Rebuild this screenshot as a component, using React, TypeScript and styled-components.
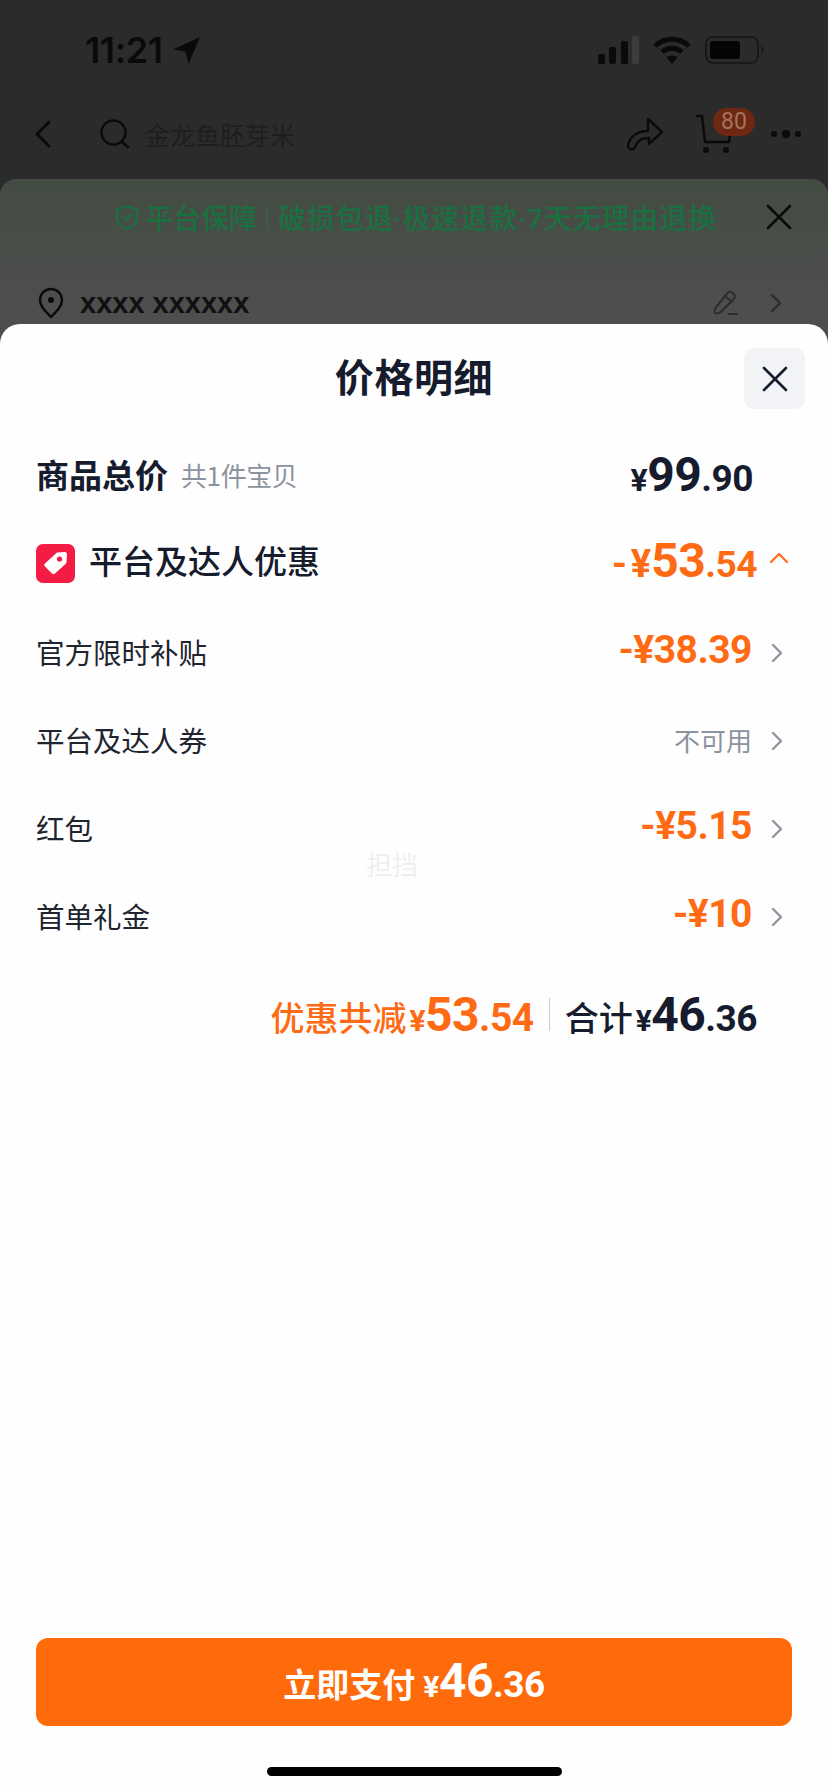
import styled, { createGlobalStyle } from 'styled-components';

const GlobalStyle = createGlobalStyle`
  html, body {
    margin: 0;
    padding: 0;
    background: #2b2b2b;
  }
  * {
    box-sizing: border-box;
  }
`;

const fontStack = `Roboto, "Noto Sans CJK SC", sans-serif`;
const cjkStack = `"Noto Sans CJK SC", sans-serif`;

const Screen = styled.div`
  position: relative;
  width: 828px;
  height: 1792px;
  overflow: hidden;
  background: #2b2b2b;
  font-family: ${cjkStack};
`;

const StatusBar = styled.div`
  display: flex;
  align-items: center;
  height: 100px;
  padding: 0 63px 0 85px;
`;

const Time = styled.span`
  font-family: Inter, sans-serif;
  font-size: 36px;
  font-weight: 600;
  letter-spacing: -0.4px;
  color: #0a0a0a;
`;

const StatusIcons = styled.div`
  display: flex;
  align-items: center;
  margin-left: auto;
  gap: 14px;
`;

const NavBar = styled.div`
  display: flex;
  align-items: center;
  height: 68px;
  padding: 0 26px 0 35px;
`;

const SearchText = styled.span`
  margin-left: 15px;
  font-size: 25px;
  color: #1e1e1e;
`;

const NavIcons = styled.div`
  display: flex;
  align-items: center;
  margin-left: auto;
`;

const CartWrap = styled.div`
  position: relative;
  display: flex;
  margin: 0 37px 0 31px;
`;

const CartBadge = styled.span`
  position: absolute;
  left: 18px;
  top: -6px;
  width: 42px;
  height: 28px;
  border-radius: 14px;
  background: #6e2710;
  color: #a5735f;
  font-family: Roboto, sans-serif;
  font-size: 23px;
  line-height: 28px;
  text-align: center;
`;

const BackSheet = styled.div`
  margin-top: 11px;
  height: 220px;
  border-radius: 16px 16px 0 0;
  background: linear-gradient(180deg, #434c42 0%, #4c4e4c 45%, #4f4f4f 100%);
`;

const GuaranteeRow = styled.div`
  position: relative;
  display: flex;
  align-items: center;
  height: 76px;
  padding-left: 115px;
  color: #1a7040;
  font-family: ${fontStack};
  font-size: 28px;
  font-weight: 500;
  letter-spacing: 0.9px;
  white-space: nowrap;
`;

const GuaranteeText = styled.span`
  margin-left: 6px;
  letter-spacing: 0;
`;

const GuaranteeBar = styled.span`
  width: 2px;
  height: 22px;
  margin: 0 10px 0 9px;
  background: #3a5f46;
`;

const GuaranteeClose = styled.span`
  position: absolute;
  right: 36px;
  top: 25px;
  display: flex;
`;

const AddressRow = styled.div`
  display: flex;
  align-items: center;
  margin-top: 30px;
  height: 36px;
  padding: 0 46px 0 38px;
`;

const AddressText = styled.span`
  margin-left: 16px;
  font-family: "Liberation Sans", sans-serif;
  font-size: 29px;
  font-weight: 700;
  color: #111;
`;

const AddressTools = styled.div`
  display: flex;
  align-items: center;
  gap: 32px;
  margin-left: auto;
`;

const Modal = styled.div`
  position: absolute;
  left: 0;
  right: 0;
  top: 324px;
  bottom: 0;
  display: flex;
  flex-direction: column;
  border-radius: 20px 20px 0 0;
  background: #fefefe;
  color: #161c2d;
`;

const ModalHeader = styled.div`
  position: relative;
  height: 61px;
  margin-top: 24px;
  padding-bottom: 8px;
  display: flex;
  align-items: center;
  justify-content: center;
`;

const ModalTitle = styled.h2`
  margin: 0;
  font-size: 39px;
  font-weight: 700;
  letter-spacing: 0.6px;
  color: #161c2d;
`;

const CloseButton = styled.div`
  position: absolute;
  right: 23px;
  top: 0;
  width: 61px;
  height: 61px;
  display: flex;
  align-items: center;
  justify-content: center;
  border-radius: 10px;
  background: #f2f3f7;
`;

const TotalRow = styled.div`
  display: flex;
  align-items: center;
  height: 80px;
  margin-top: 28px;
  padding: 0 75px 0 36px;
`;

const TotalLabel = styled.span`
  padding-bottom: 6px;
  font-size: 33px;
  font-weight: 700;
`;

const TotalHint = styled.span`
  margin-left: 13px;
  padding-bottom: 6px;
  font-size: 26px;
  letter-spacing: -0.4px;
  color: #8c939e;
`;

const DiscountRow = styled.div`
  display: flex;
  align-items: center;
  height: 92px;
  padding: 0 39px 0 36px;
`;

const TagBox = styled.span`
  display: flex;
  margin-right: 14px;
`;

const DiscountLabel = styled.span`
  padding-bottom: 6px;
  font-size: 33px;
  font-weight: 500;
`;

const Amount = styled.span<{ $color?: string }>`
  display: inline-flex;
  align-items: baseline;
  margin-left: auto;
  padding-bottom: 6px;
  font-family: ${fontStack};
  font-weight: 700;
  white-space: nowrap;
  color: ${(props) => props.$color || 'inherit'};
`;

const Part = styled.span<{ $size: number; $track?: number }>`
  font-size: ${(props) => props.$size}px;
  letter-spacing: ${(props) => props.$track ?? -0.5}px;
  margin-right: ${(props) => (props.$track ? -props.$track : 0)}px;
`;

const DetailRow = styled.div`
  display: flex;
  align-items: center;
  height: 88px;
  padding: 0 45px 0 36px;
`;

const DetailLabel = styled.span`
  padding-bottom: 4px;
  font-size: 28.5px;
  color: #20242e;
`;

const MutedValue = styled.span`
  margin-left: auto;
  padding-bottom: 4px;
  font-size: 26px;
  color: #8c939e;
`;

const ChevronSlot = styled.span`
  display: flex;
  margin-left: 19px;
`;

const Watermark = styled.span`
  position: absolute;
  left: 366px;
  top: 521px;
  font-size: 26px;
  color: #efefef;
`;

const SummaryRow = styled.div`
  display: flex;
  align-items: center;
  justify-content: flex-end;
  height: 64px;
  margin-top: 21px;
  padding-right: 71px;
`;

const SummaryBlock = styled.span<{ $color: string }>`
  display: inline-flex;
  align-items: baseline;
  font-family: ${fontStack};
  font-weight: 700;
  color: ${(props) => props.$color};
`;

const SummaryLabel = styled.span`
  margin-right: 3px;
  font-family: ${cjkStack};
  font-size: 34px;
  font-weight: 500;
`;

const Divider = styled.span`
  width: 1px;
  height: 33px;
  margin: 0 15px;
  background: #c9cbd0;
`;

const PayButton = styled.button`
  display: flex;
  align-items: baseline;
  justify-content: center;
  width: 756px;
  height: 88px;
  margin: auto 36px 0;
  padding: 14px 0 0;
  border: none;
  border-radius: 12px;
  background: #ff6a0a;
  color: #fff;
  font-family: ${fontStack};
  font-weight: 700;
`;

const PayLabel = styled.span`
  margin-right: 8px;
  font-family: ${cjkStack};
  font-size: 33px;
  font-weight: 700;
`;

const HomeBar = styled.div`
  width: 295px;
  height: 9px;
  margin: 41px auto 16px;
  border-radius: 5px;
  background: #000;
`;

function Chevron({ color = '#8f95a0' }: { color?: string }) {
  return (
    <svg width="12" height="20" viewBox="0 0 12 20" fill="none">
      <path d="M2 2l8 8-8 8" stroke={color} strokeWidth="2.4" strokeLinecap="round" strokeLinejoin="round" />
    </svg>
  );
}

function CloseIcon({ size, color }: { size: number; color: string }) {
  return (
    <svg width={size} height={size} viewBox="0 0 26 26" fill="none">
      <path d="M2 2l22 22M24 2L2 24" stroke={color} strokeWidth="2.6" strokeLinecap="round" />
    </svg>
  );
}

function Money({
  prefix = '¥',
  whole,
  decimals,
  yenSize,
  wholeSize,
  decSize,
  prefixTrack,
}: {
  prefix?: string;
  whole: string;
  decimals?: string;
  yenSize: number;
  wholeSize: number;
  decSize?: number;
  prefixTrack?: number;
}) {
  return (
    <>
      <Part $size={yenSize} $track={prefixTrack}>{prefix}</Part>
      <Part $size={wholeSize}>{whole}</Part>
      {decimals && <Part $size={decSize || wholeSize}>{decimals}</Part>}
    </>
  );
}

const details = [
  { label: '官方限时补贴', value: '38.39' },
  { label: '平台及达人券', value: '' },
  { label: '红包', value: '5.15' },
  { label: '首单礼金', value: '10' },
];

export default function App() {
  return (
    <Screen>
      <GlobalStyle />

      <StatusBar>
        <Time>11:21</Time>
        <svg width="29" height="29" viewBox="0 0 28 28" style={{ marginLeft: 9 }}>
          <path d="M27 1L1 13l12 2 3 12z" fill="#0a0a0a" />
        </svg>
        <StatusIcons>
          <svg width="41" height="28" viewBox="0 0 41 28">
            <rect x="0" y="18" width="7" height="10" rx="2" fill="#0a0a0a" />
            <rect x="11" y="11" width="7" height="17" rx="2" fill="#0a0a0a" />
            <rect x="23" y="5" width="7" height="23" rx="2" fill="#0a0a0a" />
            <rect x="34" y="0" width="7" height="28" rx="2" fill="#3c3c3c" />
          </svg>
          <svg width="38" height="28" viewBox="0 0 38 28" fill="none">
            <path d="M2 10c10-9 24-9 34 0" stroke="#0a0a0a" strokeWidth="5" />
            <path d="M9 16c6-5 14-5 20 0" stroke="#0a0a0a" strokeWidth="5" />
            <path d="M19 28l-6-7c4-2 8-2 12 0z" fill="#0a0a0a" />
          </svg>
          <svg width="60" height="28" viewBox="0 0 60 28" fill="none">
            <rect x="1" y="1" width="52" height="26" rx="7" stroke="#151515" strokeWidth="1.6" />
            <rect x="5" y="5" width="30" height="18" rx="3" fill="#050505" />
            <path d="M56 10c2 1 3 2 3 4s-1 3-3 4z" fill="#1c1c1c" />
          </svg>
        </StatusIcons>
      </StatusBar>

      <NavBar>
        <svg width="16" height="28" viewBox="0 0 16 28" fill="none">
          <path d="M14 2L2 14l12 12" stroke="#0a0a0a" strokeWidth="3" strokeLinecap="round" strokeLinejoin="round" />
        </svg>
        <svg width="30" height="30" viewBox="0 0 30 30" fill="none" style={{ marginLeft: 49 }}>
          <circle cx="13.5" cy="13.5" r="12" stroke="#0a0a0a" strokeWidth="2.4" />
          <path d="M22 23l6 5" stroke="#0a0a0a" strokeWidth="2.6" strokeLinecap="round" />
        </svg>
        <SearchText>金龙鱼胚芽米</SearchText>
        <NavIcons>
          <svg width="38" height="34" viewBox="0 0 38 34" fill="none">
            <path
              d="M22 2l14 13-13 12v-6c-8 0-11 2-15 11-3 1-6 0-6-3 1-9 9-15 20-15z"
              stroke="#0a0a0a"
              strokeWidth="2.4"
              strokeLinejoin="round"
            />
          </svg>
          <CartWrap>
            <svg width="38" height="40" viewBox="0 0 38 40" fill="none">
              <path d="M1 2h6l3 26h24l2-14" stroke="#0a0a0a" strokeWidth="2.4" strokeLinejoin="round" />
              <circle cx="11" cy="36" r="3" fill="#0a0a0a" />
              <circle cx="31" cy="36" r="3" fill="#0a0a0a" />
            </svg>
            <CartBadge>80</CartBadge>
          </CartWrap>
          <svg width="32" height="12" viewBox="0 0 32 12">
            <circle cx="4" cy="6" r="3" fill="#0a0a0a" />
            <circle cx="16" cy="6" r="4.2" fill="#0a0a0a" />
            <circle cx="28" cy="6" r="3" fill="#0a0a0a" />
          </svg>
        </NavIcons>
      </NavBar>

      <BackSheet>
        <GuaranteeRow>
          <svg width="24" height="27" viewBox="0 0 24 27" fill="none">
            <path d="M2 5c4 0 7-1 10-3 3 2 6 3 10 3v9c0 6-5 9-10 11C7 23 2 20 2 14z" stroke="#1a7040" strokeWidth="2.2" strokeLinejoin="round" />
            <path d="M7 12l4 4 6-6" stroke="#1a7040" strokeWidth="2.2" />
          </svg>
          <GuaranteeText>平台保障</GuaranteeText>
          <GuaranteeBar />
          <span>破损包退·极速退款·7天无理由退换</span>
          <GuaranteeClose>
            <CloseIcon size={26} color="#0a0a0a" />
          </GuaranteeClose>
        </GuaranteeRow>
        <AddressRow>
          <svg width="26" height="32" viewBox="0 0 26 32" fill="none">
            <path d="M13 30C7 24 2 19 2 13a11 11 0 0122 0c0 6-5 11-11 17z" stroke="#0a0a0a" strokeWidth="2.4" strokeLinejoin="round" />
            <circle cx="13" cy="13" r="3" fill="#0a0a0a" />
          </svg>
          <AddressText>xxxx xxxxxx</AddressText>
          <AddressTools>
            <svg width="26" height="26" viewBox="0 0 26 26" fill="none">
              <path d="M16 2.500c1-1 3-1 4 0l2 2c1 1 1 3 0 4L10 21c-2 2-6 3-7 2s0-5 2-7z" stroke="#2c2c2c" strokeWidth="2" strokeLinejoin="round" />
              <path d="M13 6l7 6M17 24h8" stroke="#2c2c2c" strokeWidth="2" strokeLinecap="round" />
            </svg>
            <Chevron color="#2c2c2c" />
          </AddressTools>
        </AddressRow>
      </BackSheet>

      <Modal>
        <ModalHeader>
          <ModalTitle>价格明细</ModalTitle>
          <CloseButton>
            <CloseIcon size={26} color="#161c2d" />
          </CloseButton>
        </ModalHeader>

        <TotalRow>
          <TotalLabel>商品总价</TotalLabel>
          <TotalHint>共1件宝贝</TotalHint>
          <Amount>
            <Money whole="99" decimals=".90" yenSize={32} wholeSize={48} decSize={37} />
          </Amount>
        </TotalRow>

        <DiscountRow>
          <TagBox>
            <svg width="39" height="39" viewBox="0 0 39 39">
              <rect width="39" height="39" rx="7" fill="#f41c45" />
              <path d="M21 8.500l8-.5c1 0 2 1 2 2l-.5 8c0 1-.5 1.500-1 2L19 29.500c-1 1-2 1-3 0l-7-7c-1-1-1-2 0-3z" fill="#fff" />
              <circle cx="23.500" cy="15" r="2.600" fill="#f41c45" />
            </svg>
          </TagBox>
          <DiscountLabel>平台及达人优惠</DiscountLabel>
          <Amount $color="#ff6a14">
            <Money prefix="-¥" prefixTrack={4} whole="53" decimals=".54" yenSize={38} wholeSize={48} decSize={37} />
          </Amount>
          <svg width="20" height="12" viewBox="0 0 20 12" fill="none" style={{ marginLeft: 12, marginBottom: 10 }}>
            <path d="M2 10l8-8 8 8" stroke="#ff6a14" strokeWidth="2.2" strokeLinecap="round" strokeLinejoin="round" />
          </svg>
        </DiscountRow>

        {details.map((item) => (
          <DetailRow key={item.label}>
            <DetailLabel>{item.label}</DetailLabel>
            {item.value ? (
              <Amount $color="#ff6a14">
                <Money prefix="-¥" whole={item.value} yenSize={39} wholeSize={39} />
              </Amount>
            ) : (
              <MutedValue>不可用</MutedValue>
            )}
            <ChevronSlot>
              <Chevron />
            </ChevronSlot>
          </DetailRow>
        ))}

        <Watermark>担挡</Watermark>

        <SummaryRow>
          <SummaryBlock $color="#ff6a14">
            <SummaryLabel>优惠共减</SummaryLabel>
            <Money whole="53" decimals=".54" yenSize={30} wholeSize={48} decSize={39} />
          </SummaryBlock>
          <Divider />
          <SummaryBlock $color="#161c2d">
            <SummaryLabel>合计</SummaryLabel>
            <Money whole="46" decimals=".36" yenSize={30} wholeSize={48} decSize={37} />
          </SummaryBlock>
        </SummaryRow>

        <PayButton>
          <PayLabel>立即支付</PayLabel>
          <Money whole="46" decimals=".36" yenSize={30} wholeSize={48} decSize={37} />
        </PayButton>
        <HomeBar />
      </Modal>
    </Screen>
  );
}
